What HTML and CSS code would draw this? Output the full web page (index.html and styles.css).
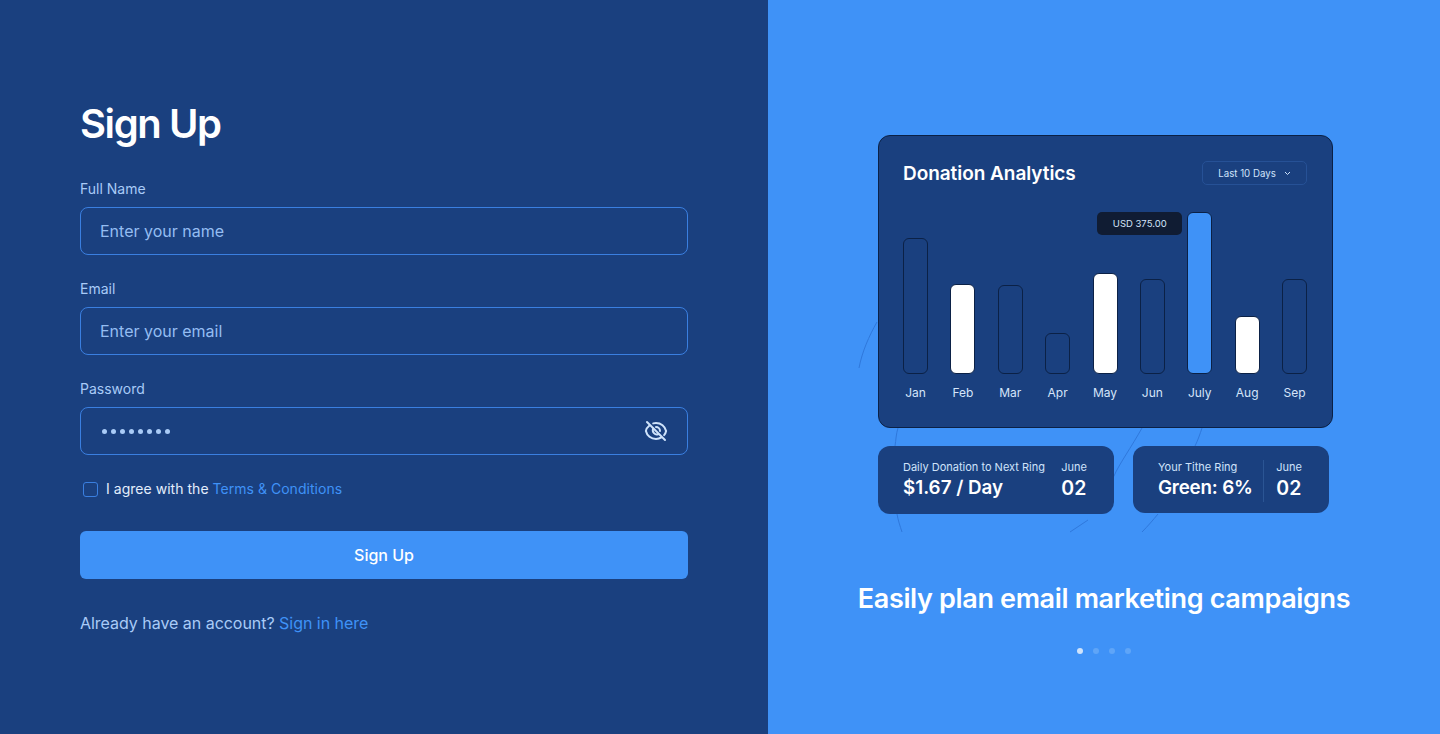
FILE: index.html
```html
<!DOCTYPE html>
<html lang="en">
<head>
<meta charset="utf-8">
<title>Sign Up</title>
<link rel="stylesheet" href="styles.css">
</head>
<body>
<main class="page">
  <section class="left">
    <h1 class="title">Sign Up</h1>
    <div class="field">
      <label class="label">Full Name</label>
      <div class="input"><span class="placeholder">Enter your name</span></div>
    </div>
    <div class="field">
      <label class="label">Email</label>
      <div class="input"><span class="placeholder">Enter your email</span></div>
    </div>
    <div class="field">
      <label class="label">Password</label>
      <div class="input">
        <span class="dots"><i></i><i></i><i></i><i></i><i></i><i></i><i></i><i></i></span>
        <svg class="eye" width="24" height="24" viewBox="0 0 24 24" fill="none" stroke="#cfe3fb" stroke-width="2" stroke-linecap="round" stroke-linejoin="round">
          <path d="M5.2 6.8C3.5 8.1 2.3 10 1.9 12c1 4.6 5.2 8 10.100 8 2 0 3.900-.6 5.400-1.600"/>
          <path d="M9.200 4.400A10.300 10.300 0 0 1 12 4c4.900 0 9.100 3.400 10.100 8-.3 1.500-1 2.900-2 4.100"/>
          <path d="M9.300 9.500A4 4 0 0 0 14.500 15"/>
          <path d="M12 8a4 4 0 0 1 4 4"/>
          <path d="M3 3l18 18"/>
        </svg>
      </div>
    </div>
    <div class="agree">
      <span class="checkbox"></span>
      <span>I agree with the <a class="link">Terms &amp; Conditions</a></span>
    </div>
    <button class="submit">Sign Up</button>
    <p class="signin">Already have an account? <a class="link">Sign in here</a></p>
  </section>
  <section class="right">
    <svg class="swirl" width="672" height="734" viewBox="0 0 672 734" fill="none" stroke="#2f78dc" stroke-width="1">
      <path d="M91 368c3-16 10-32 18-46"/>
      <path d="M130 428c-2 6-2 12-3 18"/>
      <path d="M129 514c1 6 3 12 5 18"/>
      <path d="M374 428c-10 18-24 38-28 48"/>
      <path d="M346 476l-12 18"/>
      <path d="M320 520l-18 12"/>
      <path d="M434 428c-2 6-4 12-7 18"/>
      <path d="M390 514c-5 6-10 12-16 18"/>
    </svg>
    <div class="showcase">
      <div class="card">
        <div class="card-head">
          <h2 class="card-title">Donation Analytics</h2>
          <div class="range">Last 10 Days
            <svg width="7" height="5" viewBox="0 0 7 5" fill="none" stroke="#cfe3fb" stroke-width="1"><path d="M1 1l2.500 2.500L6 1"/></svg>
          </div>
        </div>
        <div class="chart">
          <div class="col"><div class="bar" style="height:136px"></div><span>Jan</span></div>
          <div class="col"><div class="bar white" style="height:90px"></div><span>Feb</span></div>
          <div class="col"><div class="bar" style="height:89px"></div><span>Mar</span></div>
          <div class="col"><div class="bar" style="height:41px"></div><span>Apr</span></div>
          <div class="col"><div class="bar white" style="height:101px"></div><span>May</span></div>
          <div class="col"><div class="bar" style="height:95px"></div><span>Jun</span></div>
          <div class="col"><div class="tooltip">USD 375.00</div><div class="bar blue" style="height:162px"></div><span>July</span></div>
          <div class="col"><div class="bar white" style="height:58px"></div><span>Aug</span></div>
          <div class="col"><div class="bar" style="height:95px"></div><span>Sep</span></div>
        </div>
      </div>
      <div class="stats">
        <div class="stat stat-a">
          <div class="stat-main">
            <div class="stat-label">Daily Donation to Next Ring</div>
            <div class="stat-value">$1.67 / Day</div>
          </div>
          <div class="stat-side">
            <div class="stat-label">June</div>
            <div class="stat-value">02</div>
          </div>
        </div>
        <div class="stat stat-b">
          <div class="stat-main">
            <div class="stat-label">Your Tithe Ring</div>
            <div class="stat-value">Green: 6%</div>
          </div>
          <div class="stat-side ruled">
            <div class="stat-label">June</div>
            <div class="stat-value">02</div>
          </div>
        </div>
      </div>
    </div>
    <h2 class="tagline">Easily plan email marketing campaigns</h2>
    <div class="pager"><i class="on"></i><i></i><i></i><i></i></div>
  </section>
</main>
</body>
</html>
```
FILE: styles.css
```css
* { box-sizing: border-box; }
html, body { margin: 0; height: 100%; }
body { font-family: Inter, "Liberation Sans", sans-serif; overflow: hidden; }
.page { display: flex; width: 1440px; height: 734px; }

.left {
  width: 768px;
  background: #1a407f;
  padding: 98px 80px 0;
  display: flex;
  flex-direction: column;
}
.title {
  margin: 0 0 29px;
  font-size: 40px;
  line-height: 52px;
  font-weight: 600;
  letter-spacing: -1.4px;
  color: #fff;
}
.field { margin-bottom: 24px; }
.label {
  display: block;
  font-size: 14px;
  line-height: 20px;
  color: #a9cbf7;
  margin-bottom: 8px;
}
.input {
  height: 48px;
  border: 1px solid #3a7fe0;
  border-radius: 8px;
  padding: 0 19px;
  display: flex;
  align-items: center;
  justify-content: space-between;
}
.placeholder { font-size: 16px; color: #94bdf2; }
.dots { display: flex; gap: 4px; margin: 1px 0 0 2px; }
.dots i { width: 5px; height: 5px; border-radius: 50%; background: #a9cbf7; }
.eye { margin-right: 0; }
.agree {
  display: flex;
  align-items: center;
  gap: 8px;
  margin: 0 0 0 3px;
  font-size: 14px;
  line-height: 20px;
  letter-spacing: 0.03px;
  color: #e3eefc;
}
.checkbox {
  width: 15px;
  height: 15px;
  border: 1.500px solid #3a7fe0;
  border-radius: 3px;
}
.link { color: #3f92f7; }
.submit {
  margin-top: 32px;
  height: 48px;
  border: 0;
  border-radius: 6px;
  background: #3f92f7;
  color: #fff;
  font: 500 16px Inter, "Liberation Sans", sans-serif;
}
.signin {
  margin: 32px 0 0;
  font-size: 16px;
  line-height: 24px;
  letter-spacing: -0.03px;
  color: #a9cbf7;
}

.right {
  position: relative;
  width: 672px;
  background: #3f92f7;
  display: flex;
  flex-direction: column;
  align-items: center;
  padding-top: 135px;
}
.swirl { position: absolute; left: 0; top: 0; }
.showcase { position: relative; width: 455px; margin-left: 3px; }
.card {
  height: 293px;
  background: #1a407f;
  border: 1.500px solid #0b2146;
  border-radius: 12px;
  padding: 25px 25px 0 24px;
}
.card-head { display: flex; justify-content: space-between; align-items: center; height: 26px; }
.card-title { margin: 0; font-size: 19px; line-height: 26px; font-weight: 600; letter-spacing: -0.05px; color: #fff; }
.range {
  width: 105px;
  height: 24px;
  margin-bottom: 2px;
  display: flex;
  align-items: center;
  justify-content: center;
  gap: 8px;
  border: 1px solid #265196;
  border-radius: 5px;
  font-size: 9.700px;
  color: #cfe3fb;
}
.chart { display: flex; justify-content: space-between; margin-top: 25px; height: 191px; }
.col {
  position: relative;
  width: 25px;
  display: flex;
  flex-direction: column;
  align-items: center;
  justify-content: flex-end;
}
.col span { height: 20px; margin-top: 9px; font-size: 12px; line-height: 19px; color: #d5e5fa; white-space: nowrap; }
.bar { width: 25px; border: 1.500px solid #0b2146; border-radius: 6px; }
.bar.white { background: #fff; }
.bar.blue { background: #3f92f7; }
.tooltip {
  position: absolute;
  right: 30px;
  top: 0;
  width: 85px;
  height: 23px;
  background: #101c33;
  border-radius: 5px;
  font-size: 9.500px;
  line-height: 23px;
  text-align: center;
  color: #d5e5fa;
  white-space: nowrap;
}
.stats { display: flex; gap: 19px; margin-top: 18px; }
.stat {
  height: 68px;
  background: #1a407f;
  border-radius: 12px;
  display: flex;
  justify-content: space-between;
  padding: 14px 0 0 25px;
}
.stat-a { width: 236px; padding-right: 27px; }
.stat-b { width: 196px; height: 67px; padding-right: 27px; }
.stat-label { font-size: 11px; line-height: 14px; color: #cfe3fb; white-space: nowrap; }
.stat-value { margin-top: 2px; font-size: 18.800px; line-height: 24px; font-weight: 600; color: #fff; white-space: nowrap; }
.stat-b .stat-main .stat-value { letter-spacing: -0.2px; }
.stat-side .stat-value { font-size: 19.500px; }
.stat-side.ruled { border-left: 1px solid #2b5594; padding-left: 12px; height: 42px; }

.tagline {
  margin: 67px 0 0;
  font-size: 27px;
  line-height: 36px;
  font-weight: 600;
  letter-spacing: -0.350px;
  color: #fff;
  white-space: nowrap;
}
.pager { display: flex; gap: 10px; margin-top: 31px; }
.pager i { width: 6px; height: 6px; border-radius: 50%; background: #5fa5f8; }
.pager i.on { background: #cfe3fb; }
```
